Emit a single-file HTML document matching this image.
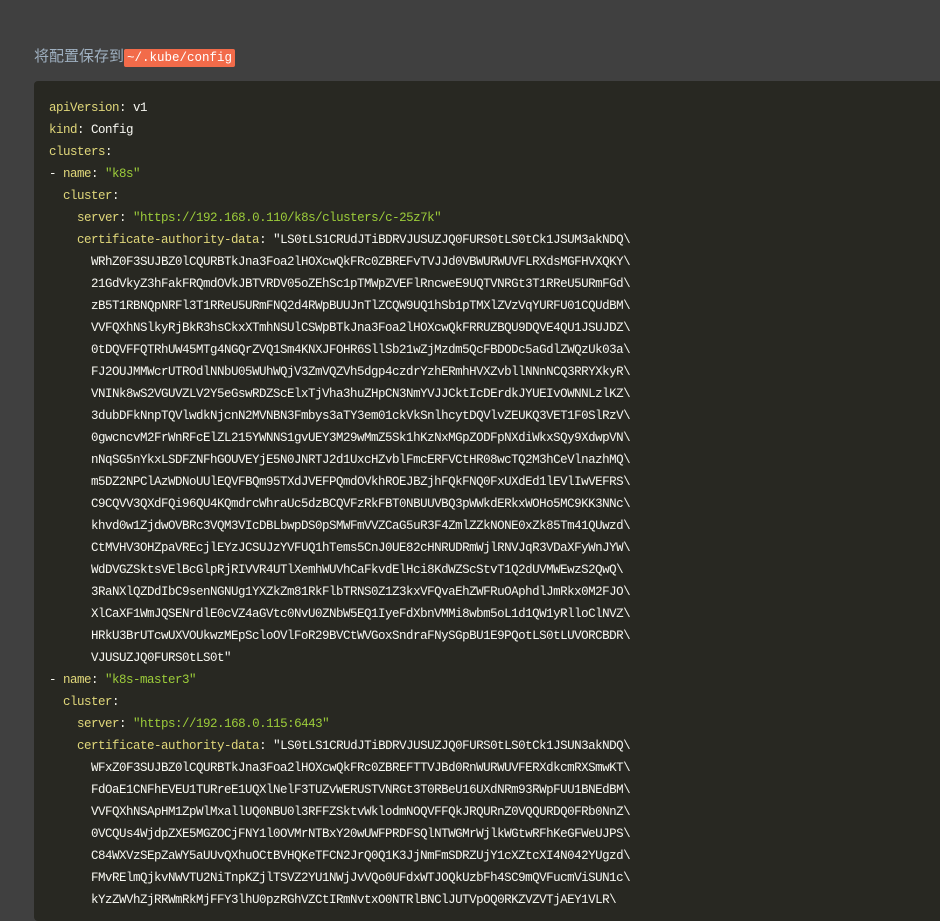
<!DOCTYPE html>
<html><head><meta charset="utf-8"><style>
html,body{margin:0;padding:0;background:#404040;width:940px;height:900px;overflow:hidden}
p{position:absolute;left:34px;top:46px;margin:0;font:15px "Liberation Sans","Noto Sans CJK SC",sans-serif;color:#9fb0c0;line-height:22px}
p code{background:#f26b4a;color:#fff;font:12.5px "Liberation Mono",monospace;padding:2px 3px;border-radius:2px}
pre{position:absolute;left:34px;top:81px;width:920px;height:840px;margin:0;background:#282822;border-radius:4px;padding:16px 0 0 15px;box-sizing:border-box;font:12.5px "Liberation Mono",monospace;letter-spacing:-0.5px;line-height:22px;color:#f8f8f2}
.k{color:#e0d77a}.s{color:#9ccc3a}
</style></head><body>
<p>将配置保存到<code>~/.kube/config</code></p>
<pre><span class="k">apiVersion</span>: v1
<span class="k">kind</span>: Config
<span class="k">clusters</span>:
- <span class="k">name</span>: <span class="s">"k8s"</span>
  <span class="k">cluster</span>:
    <span class="k">server</span>: <span class="s">"https://192.168.0.110/k8s/clusters/c-25z7k"</span>
    <span class="k">certificate-authority-data</span>: "LS0tLS1CRUdJTiBDRVJUSUZJQ0FURS0tLS0tCk1JSUM3akNDQ\
      WRhZ0F3SUJBZ0lCQURBTkJna3Foa2lHOXcwQkFRc0ZBREFvTVJJd0VBWURWUVFLRXdsMGFHVXQKY\
      21GdVkyZ3hFakFRQmdOVkJBTVRDV05oZEhSc1pTMWpZVEFlRncweE9UQTVNRGt3T1RReU5URmFGd\
      zB5T1RBNQpNRFl3T1RReU5URmFNQ2d4RWpBUUJnTlZCQW9UQ1hSb1pTMXlZVzVqYURFU01CQUdBM\
      VVFQXhNSlkyRjBkR3hsCkxXTmhNSUlCSWpBTkJna3Foa2lHOXcwQkFRRUZBQU9DQVE4QU1JSUJDZ\
      0tDQVFFQTRhUW45MTg4NGQrZVQ1Sm4KNXJFOHR6SllSb21wZjMzdm5QcFBDODc5aGdlZWQzUk03a\
      FJ2OUJMMWcrUTROdlNNbU05WUhWQjV3ZmVQZVh5dgp4czdrYzhERmhHVXZvbllNNnNCQ3RRYXkyR\
      VNINk8wS2VGUVZLV2Y5eGswRDZScElxTjVha3huZHpCN3NmYVJJCktIcDErdkJYUEIvOWNNLzlKZ\
      3dubDFkNnpTQVlwdkNjcnN2MVNBN3Fmbys3aTY3em01ckVkSnlhcytDQVlvZEUKQ3VET1F0SlRzV\
      0gwcncvM2FrWnRFcElZL215YWNNS1gvUEY3M29wMmZ5Sk1hKzNxMGpZODFpNXdiWkxSQy9XdwpVN\
      nNqSG5nYkxLSDFZNFhGOUVEYjE5N0JNRTJ2d1UxcHZvblFmcERFVCtHR08wcTQ2M3hCeVlnazhMQ\
      m5DZ2NPClAzWDNoUUlEQVFBQm95TXdJVEFPQmdOVkhROEJBZjhFQkFNQ0FxUXdEd1lEVlIwVEFRS\
      C9CQVV3QXdFQi96QU4KQmdrcWhraUc5dzBCQVFzRkFBT0NBUUVBQ3pWWkdERkxWOHo5MC9KK3NNc\
      khvd0w1ZjdwOVBRc3VQM3VIcDBLbwpDS0pSMWFmVVZCaG5uR3F4ZmlZZkNONE0xZk85Tm41QUwzd\
      CtMVHV3OHZpaVREcjlEYzJCSUJzYVFUQ1hTems5CnJ0UE82cHNRUDRmWjlRNVJqR3VDaXFyWnJYW\
      WdDVGZSktsVElBcGlpRjRIVVR4UTlXemhWUVhCaFkvdElHci8KdWZScStvT1Q2dUVMWEwzS2QwQ\
      3RaNXlQZDdIbC9senNGNUg1YXZkZm81RkFlbTRNS0Z1Z3kxVFQvaEhZWFRuOAphdlJmRkx0M2FJO\
      XlCaXF1WmJQSENrdlE0cVZ4aGVtc0NvU0ZNbW5EQ1IyeFdXbnVMMi8wbm5oL1d1QW1yRlloClNVZ\
      HRkU3BrUTcwUXVOUkwzMEpScloOVlFoR29BVCtWVGoxSndraFNySGpBU1E9PQotLS0tLUVORCBDR\
      VJUSUZJQ0FURS0tLS0t"
- <span class="k">name</span>: <span class="s">"k8s-master3"</span>
  <span class="k">cluster</span>:
    <span class="k">server</span>: <span class="s">"https://192.168.0.115:6443"</span>
    <span class="k">certificate-authority-data</span>: "LS0tLS1CRUdJTiBDRVJUSUZJQ0FURS0tLS0tCk1JSUN3akNDQ\
      WFxZ0F3SUJBZ0lCQURBTkJna3Foa2lHOXcwQkFRc0ZBREFTTVJBd0RnWURWUVFERXdkcmRXSmwKT\
      FdOaE1CNFhEVEU1TURreE1UQXlNelF3TUZvWERUSTVNRGt3T0RBeU16UXdNRm93RWpFUU1BNEdBM\
      VVFQXhNSApHM1ZpWlMxallUQ0NBU0l3RFFZSktvWklodmNOQVFFQkJRQURnZ0VQQURDQ0FRb0NnZ\
      0VCQUs4WjdpZXE5MGZOCjFNY1l0OVMrNTBxY20wUWFPRDFSQlNTWGMrWjlkWGtwRFhKeGFWeUJPS\
      C84WXVzSEpZaWY5aUUvQXhuOCtBVHQKeTFCN2JrQ0Q1K3JjNmFmSDRZUjY1cXZtcXI4N042YUgzd\
      FMvRElmQjkvNWVTU2NiTnpKZjlTSVZ2YU1NWjJvVQo0UFdxWTJOQkUzbFh4SC9mQVFucmViSUN1c\
      kYzZWVhZjRRWmRkMjFFY3lhU0pzRGhVZCtIRmNvtxO0NTRlBNClJUTVpOQ0RKZVZVTjAEY1VLR\
</pre>
</body></html>
